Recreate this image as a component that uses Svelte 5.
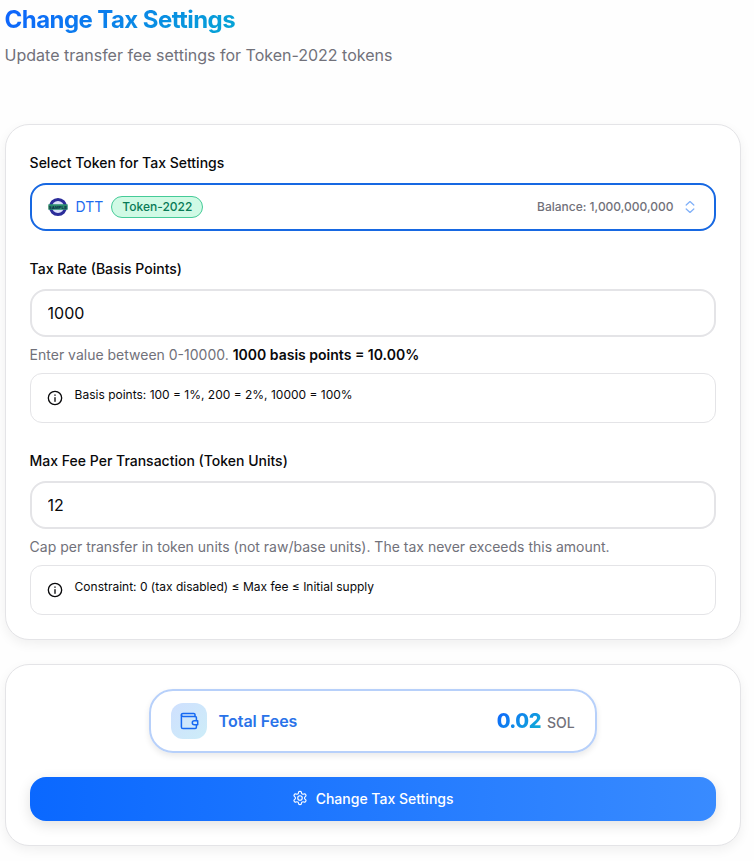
<script lang="ts">
  type Token = {
    symbol: string;
    standard: string;
    balance: number;
  };

  const token: Token = { symbol: 'DTT', standard: 'Token-2022', balance: 1000000000 };
  const totalFees = 0.02;

  let taxRate = $state('1000');
  let maxFee = $state('12');

  let percent = $derived((Number(taxRate) / 100).toFixed(2));
</script>

{#snippet note(text: string)}
  <div class="note">
    <svg class="note-icon" viewBox="0 0 24 24" aria-hidden="true">
      <circle cx="12" cy="12" r="10" />
      <path d="M12 11.5V17" />
      <path d="M12 7.4v.5" />
    </svg>
    <p>{text}</p>
  </div>
{/snippet}

<main class="page">
  <header>
    <h1>Change Tax Settings</h1>
    <p class="subtitle">Update transfer fee settings for Token-2022 tokens</p>
  </header>

  <section class="card form">
    <div class="field">
      <span class="label">Select Token for Tax Settings</span>
      <button class="control token-select" type="button">
        <svg class="token-logo" viewBox="0 0 20 20" aria-hidden="true">
          <circle cx="10" cy="10" r="7.6" fill="#d9e0fa" stroke="#2b2c9a" stroke-width="3" />
          <rect x="0.3" y="7.2" width="19.4" height="5.6" rx="0.6" fill="#2a8c6c" />
          <text x="10" y="11.6" text-anchor="middle">SAMPLE</text>
        </svg>
        <span class="symbol">{token.symbol}</span>
        <span class="badge">{token.standard}</span>
        <span class="balance">Balance: {token.balance.toLocaleString('en-US')}</span>
        <svg class="chevrons" viewBox="0 0 16 16" aria-hidden="true">
          <path d="M4.2 6 8 2.6 11.8 6" />
          <path d="M4.2 10 8 13.4l3.8-3.4" />
        </svg>
      </button>
    </div>

    <div class="field">
      <label class="label" for="tax-rate">Tax Rate (Basis Points)</label>
      <input id="tax-rate" class="control" bind:value={taxRate} />
      <p class="helper">
        Enter value between 0-10000. <strong>{taxRate} basis points = {percent}%</strong>
      </p>
      {@render note('Basis points: 100 = 1%, 200 = 2%, 10000 = 100%')}
    </div>

    <div class="field">
      <label class="label" for="max-fee">Max Fee Per Transaction (Token Units)</label>
      <input id="max-fee" class="control" bind:value={maxFee} />
      <p class="helper">
        Cap per transfer in token units (not raw/base units). The tax never exceeds this amount.
      </p>
      {@render note('Constraint: 0 (tax disabled) ≤ Max fee ≤ Initial supply')}
    </div>
  </section>

  <section class="card summary">
    <div class="fees">
      <span class="fees-icon">
        <svg viewBox="0 0 20 20" aria-hidden="true">
          <path d="M16 5.4V3.6a1.2 1.2 0 0 0-1.2-1.2H3.9a1.5 1.5 0 0 0-1.5 1.5v12a1.6 1.6 0 0 0 1.6 1.6h12.2a1.2 1.2 0 0 0 1.2-1.2v-2.4" />
          <path d="M2.4 3.9a1.5 1.5 0 0 0 1.5 1.5h12.3a1.2 1.2 0 0 1 1.2 1.2v3" />
          <path d="M18.7 9.7v4h-3.4a2 2 0 0 1 0-4z" />
        </svg>
      </span>
      <span class="fees-label">Total Fees</span>
      <span class="amount">{totalFees}</span>
      <span class="unit">SOL</span>
    </div>

    <button class="submit" type="button">
      <svg viewBox="0 0 24 24" aria-hidden="true">
        <path d="M12.22 2h-.44a2 2 0 0 0-2 2v.18a2 2 0 0 1-1 1.73l-.43.25a2 2 0 0 1-2 0l-.15-.08a2 2 0 0 0-2.73.73l-.22.38a2 2 0 0 0 .73 2.73l.15.1a2 2 0 0 1 1 1.72v.51a2 2 0 0 1-1 1.74l-.15.09a2 2 0 0 0-.73 2.73l.22.38a2 2 0 0 0 2.73.73l.15-.08a2 2 0 0 1 2 0l.43.25a2 2 0 0 1 1 1.73V20a2 2 0 0 0 2 2h.44a2 2 0 0 0 2-2v-.18a2 2 0 0 1 1-1.73l.43-.25a2 2 0 0 1 2 0l.15.08a2 2 0 0 0 2.73-.73l.22-.39a2 2 0 0 0-.73-2.73l-.15-.08a2 2 0 0 1-1-1.74v-.5a2 2 0 0 1 1-1.74l.15-.09a2 2 0 0 0 .73-2.73l-.22-.38a2 2 0 0 0-2.73-.73l-.15.08a2 2 0 0 1-2 0l-.43-.25a2 2 0 0 1-1-1.73V4a2 2 0 0 0-2-2z" />
        <circle cx="12" cy="12" r="3.4" />
      </svg>
      Change Tax Settings
    </button>
  </section>
</main>

<style>
  :global(body) {
    margin: 0;
    background: #fefefe;
  }

  .page {
    box-sizing: border-box;
    width: 745.6px;
    min-height: 861px;
    padding: 4px 5px 0 4.6px;
    font-family: Inter, sans-serif;
    color: #09090b;
  }

  header {
    height: 120px;
  }

  h1 {
    width: fit-content;
    margin: 0;
    font-size: 24px;
    line-height: 32px;
    font-weight: 700;
    letter-spacing: -0.57px;
    color: transparent;
    background: linear-gradient(135deg, #0f62fe, #06a6d4);
    -webkit-background-clip: text;
    background-clip: text;
  }

  .subtitle {
    margin: 7px 0 0;
    font-size: 16px;
    line-height: 24px;
    color: #71717a;
  }

  .card {
    display: flex;
    flex-direction: column;
    gap: 24px;
    padding: 24px;
    border: 1px solid #e4e4e7;
    border-radius: 24px;
    background: #fff;
    box-shadow: 0 4px 12px rgba(0, 0, 0, 0.06);
  }

  .summary {
    margin-top: 24px;
  }

  .field {
    display: flex;
    flex-direction: column;
  }

  .label {
    margin-bottom: 6px;
    font-size: 14px;
    line-height: 28px;
    font-weight: 500;
  }

  .control {
    box-sizing: border-box;
    width: 100%;
    height: 48px;
    padding: 0 16px;
    border: 2px solid #e4e4e7;
    border-radius: 16px;
    outline: none;
    background: #fff;
    font: 16px Inter, sans-serif;
    color: #09090b;
  }

  .token-select {
    display: flex;
    align-items: center;
    border-color: #1768e2;
  }

  .token-logo {
    width: 20px;
    height: 20px;
  }

  .token-logo text {
    font: 700 4.4px 'Liberation Sans', sans-serif;
    fill: #0b2547;
  }

  .symbol {
    margin-left: 8px;
    font-size: 14px;
    line-height: 20px;
    color: #1d6bef;
  }

  .badge {
    box-sizing: border-box;
    height: 22px;
    margin-left: 8px;
    padding: 0 10px;
    border: 1px solid #45cb98;
    border-radius: 11px;
    background: #d0fae5;
    font-size: 12px;
    line-height: 20px;
    font-weight: 500;
    color: #087a57;
  }

  .balance {
    margin-left: auto;
    font-size: 12px;
    line-height: 16px;
    font-weight: 500;
    color: #71717a;
  }

  .chevrons {
    width: 16px;
    height: 16px;
    margin-left: 8px;
    fill: none;
    stroke: #80b0f8;
    stroke-width: 1.3;
    stroke-linecap: round;
    stroke-linejoin: round;
  }

  .helper {
    margin: 8px 0;
    font-size: 14px;
    line-height: 20px;
    color: #71717a;
  }

  .helper strong {
    font-weight: 600;
    color: #09090b;
  }

  .note {
    box-sizing: border-box;
    display: flex;
    gap: 12px;
    height: 50px;
    padding: 12px 16px;
    border: 1px solid #e4e4e7;
    border-radius: 12px;
  }

  .note-icon {
    width: 16px;
    height: 16px;
    margin-top: 4px;
    fill: none;
    stroke: currentColor;
    stroke-width: 2;
    stroke-linecap: round;
  }

  .note p {
    margin: 0;
    font-size: 12px;
    line-height: 18px;
  }

  .fees {
    box-sizing: border-box;
    display: flex;
    align-items: center;
    align-self: center;
    width: 448px;
    height: 64px;
    padding: 0 20px;
    border: 2px solid #b7d0fa;
    border-radius: 24px;
    box-shadow: 0 3px 6px rgba(0, 0, 0, 0.09);
  }

  .fees-icon {
    display: grid;
    place-items: center;
    width: 36px;
    height: 36px;
    border-radius: 12px;
    background: linear-gradient(135deg, #cfe0fe, #cdedf8);
  }

  .fees-icon svg {
    width: 20px;
    height: 20px;
    fill: none;
    stroke: #1669f2;
    stroke-width: 1.5;
    stroke-linejoin: round;
    stroke-linecap: round;
  }

  .fees-label {
    margin-left: 12px;
    font-size: 16px;
    font-weight: 600;
    color: #2a73e9;
  }

  .amount {
    margin-left: auto;
    font-size: 20px;
    font-weight: 800;
    letter-spacing: -0.5px;
    color: transparent;
    background: linear-gradient(135deg, #0f62fe, #10b3d3);
    -webkit-background-clip: text;
    background-clip: text;
  }

  .unit {
    margin: 3px 0 0 6px;
    font-size: 14px;
    font-weight: 500;
    color: #71717a;
  }

  .submit {
    display: flex;
    align-items: center;
    justify-content: center;
    gap: 8px;
    height: 44px;
    padding: 0 0 2px;
    border: 0;
    border-radius: 16px;
    background: linear-gradient(90deg, #0a68ff, #398bff);
    box-shadow: 0 4px 14px rgba(0, 0, 0, 0.12);
    font: 500 14px Inter, sans-serif;
    color: #fff;
  }

  .submit svg {
    width: 16px;
    height: 16px;
    fill: none;
    stroke: currentColor;
    stroke-width: 1.7;
  }
</style>
